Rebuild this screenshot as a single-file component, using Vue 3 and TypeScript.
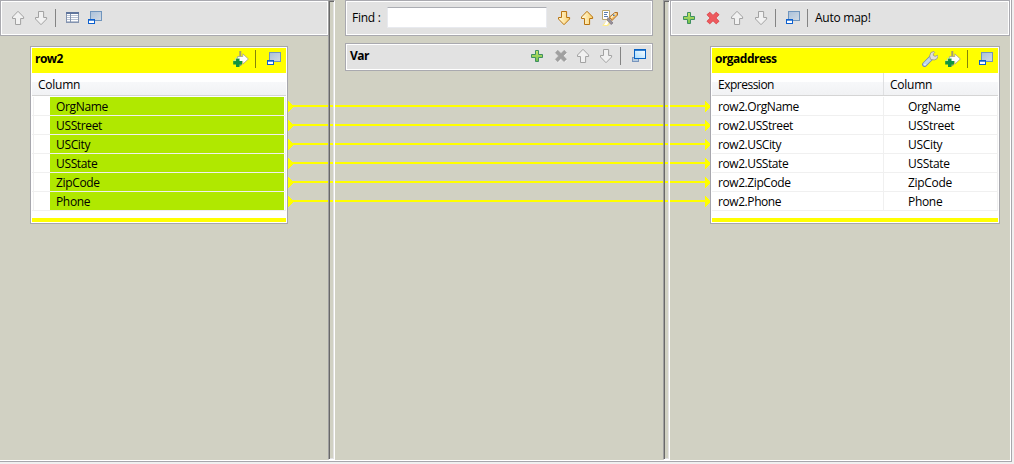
<script setup lang="ts">
interface Tool {
  icon: string
  gap?: string
}

const fields: string[] = ['OrgName', 'USStreet', 'USCity', 'USState', 'ZipCode', 'Phone']

const inputTools: Tool[] = [
  { icon: 'up' },
  { icon: 'down', gap: 'g7' },
  { icon: 'sep', gap: 'g6' },
  { icon: 'table', gap: 'g9' },
  { icon: 'restore', gap: 'g6' },
]
const findTools: Tool[] = [
  { icon: 'down-gold', gap: 'g9' },
  { icon: 'up-gold', gap: 'g7' },
  { icon: 'torch', gap: 'g7' },
]
const varTools: Tool[] = [
  { icon: 'plus' },
  { icon: 'cross-gray', gap: 'g8' },
  { icon: 'up', gap: 'g6' },
  { icon: 'down', gap: 'g7' },
  { icon: 'sep', gap: 'g6' },
  { icon: 'maximize', gap: 'g10' },
]
const outputTools: Tool[] = [
  { icon: 'plus' },
  { icon: 'cross', gap: 'g8' },
  { icon: 'up', gap: 'g8' },
  { icon: 'down', gap: 'g8' },
  { icon: 'sep', gap: 'g6' },
  { icon: 'restore', gap: 'g9' },
  { icon: 'sep', gap: 'g6' },
]
const sourceTools: Tool[] = [
  { icon: 'add' },
  { icon: 'sep', gap: 'g6' },
  { icon: 'restore', gap: 'g10' },
]
const targetTools: Tool[] = [{ icon: 'wrench' }, { icon: 'add', gap: 'g7' }, ...sourceTools.slice(1)]
</script>

<template>
  <svg class="defs" width="0" height="0" aria-hidden="true">
    <defs>
      <linearGradient id="gold" x1="0" y1="0" x2="1" y2="0">
        <stop offset="0" stop-color="#fffbe0" />
        <stop offset="1" stop-color="#fbcf6a" />
      </linearGradient>
      <linearGradient id="green" x1="0" y1="0" x2="0" y2="1">
        <stop offset="0" stop-color="#c9e66a" />
        <stop offset="1" stop-color="#6fc04a" />
      </linearGradient>
      <linearGradient id="pane" x1="0" y1="0" x2="1" y2="1">
        <stop offset="0" stop-color="#a9c0da" />
        <stop offset="1" stop-color="#d3dbe3" />
      </linearGradient>
      <linearGradient id="sky" x1="1" y1="0" x2="0" y2="1">
        <stop offset="0" stop-color="#ffffff" />
        <stop offset="1" stop-color="#a6dcff" />
      </linearGradient>
      <symbol id="up" viewBox="0 0 16 16">
        <path d="M8 1.3 13.6 7v1.5h-3v6H5.5v-6h-3V7z" fill="#f1f1f1" stroke="#a2a2a2" />
      </symbol>
      <symbol id="down" viewBox="0 0 16 16">
        <path d="M8 14.7 13.6 9V7.5h-3v-6H5.5v6h-3V9z" fill="#f1f1f1" stroke="#a2a2a2" />
      </symbol>
      <symbol id="up-gold" viewBox="0 0 16 16">
        <path d="M8 1.3 13.6 7v1.5h-3v6H5.5v-6h-3V7z" fill="url(#gold)" stroke="#b9740f" />
      </symbol>
      <symbol id="down-gold" viewBox="0 0 16 16">
        <path d="M8 14.7 13.6 9V7.5h-3v-6H5.5v6h-3V9z" fill="url(#gold)" stroke="#b9740f" />
      </symbol>
      <symbol id="plus" viewBox="0 0 16 16">
        <path d="M6.5 2.5h3v4h4v3h-4v4h-3v-4h-4v-3h4z" fill="url(#green)" stroke="#3f8f62" />
      </symbol>
      <symbol id="cross" viewBox="0 0 16 16">
        <path d="M4.8 2.3 8 5.4l3.2-3.1 2.8 2.4L10.8 8l3.2 3.3-2.8 2.5L8 10.7l-3.2 3.1L2 11.3 5.2 8 2 4.7z" fill="#ee5a5e" stroke="#dc4a4e" />
      </symbol>
      <symbol id="cross-gray" viewBox="0 0 16 16">
        <path d="M4.8 2.3 8 5.5l3.2-3.2 2.4 2.4L10.4 8l3.2 3.3-2.4 2.5L8 10.6l-3.2 3.2-2.4-2.5L5.6 8 2.4 4.7z" fill="#a0a0a0" stroke="#a0a0a0" stroke-width=".6" />
        <path d="M14 5.2 11.2 8m2.8 3.5-2.5 2.6M8 11.5l-2.7 2.7" fill="none" stroke="#fff" stroke-width=".7" />
      </symbol>
      <symbol id="table" viewBox="0 0 16 16">
        <rect x="1.5" y="2.5" width="12" height="10" fill="#fff" stroke="#8494b0" />
        <path d="M1 3h13" stroke="#60759c" stroke-width="2" />
        <path d="M2 5.5h11M2 7.5h11M2 9.5h11M2 11.5h11" stroke="#b7c1d2" />
        <path d="M5.5 4v9" stroke="#8494b0" />
      </symbol>
      <symbol id="restore" viewBox="0 0 16 16">
        <rect x="3.5" y="1.5" width="11" height="9" fill="url(#pane)" stroke="#7095bd" />
        <rect x="1.5" y="9.5" width="6" height="4" fill="#fff" stroke="#0d60cf" />
        <path d="M1 10h7" stroke="#0d60cf" stroke-width="1.4" />
      </symbol>
      <symbol id="maximize" viewBox="0 0 16 16">
        <rect x="1.5" y="9.5" width="6" height="4" fill="#b5cbe0" stroke="#7895bd" />
        <rect x="3.5" y="1.5" width="11" height="9" fill="url(#sky)" stroke="#0762c4" />
        <path d="M3 2h12" stroke="#0762c4" stroke-width="1.6" />
      </symbol>
      <symbol id="add" viewBox="0 0 16 16">
        <path d="M6.3 0h2v15h-2z" fill="#a3a070" />
        <path d="M4.5 5.5h5.3V2.8L15.4 8l-5.6 5.2v-2.7H4.5z" fill="#fff" stroke="#a5a08a" stroke-width=".8" />
        <path d="M3 7.5h3.5V10H9v3.4H6.5v2.8H3v-2.8H.2V10H3z" fill="#119440" />
        <path d="M.2 9.6h2.4V7.1h4" fill="none" stroke="#b5e4c0" stroke-width=".8" />
      </symbol>
      <symbol id="wrench" viewBox="0 0 16 16">
        <path d="m2.6 13.4 6.4-6.4" stroke="#7089b5" stroke-width="5" stroke-linecap="round" />
        <path d="m2.7 13.3 6.3-6.3" stroke="#bdd6ed" stroke-width="3.4" stroke-linecap="round" />
        <path d="M11.9.5 8.9 1.5 7.6 5l1 3.4 3.6.6 2.7-1.2L16 5.2l-.5-.9-2.4 1-1.7-.8-.1-1.6 1.5-1.4z" fill="#e1e0dc" stroke="#94938a" stroke-width=".8" />
        <path d="M2.5 13h1v1h-1z" fill="#fff" />
      </symbol>
      <symbol id="torch" viewBox="0 0 16 16">
        <path d="M.5.5h7v9h-7z" fill="#fff" stroke="#b9a66b" />
        <path d="M2 2.5h4M2 4.5h3M2 6.5h4" stroke="#587eaf" />
        <path d="m5.5 9-5 6.2V16H6l3-3z" fill="#ffec8d" />
        <path d="m5 10-3 5h3l2-3z" fill="#fff" />
        <path d="M6 7.5 11 13l-2 1.5L5 10z" fill="#99919a" stroke="#6f6876" stroke-width=".6" />
        <path d="m7.5 7 5.5-4.5h2.5V5L10 10.5z" fill="#f4bd68" stroke="#ae702c" />
        <path d="m9 7.8 4.5-4.3" stroke="#fff1c7" stroke-width="1.4" />
        <path d="M11 4.5h1.6v1.6H11z" fill="#477bb4" />
      </symbol>
    </defs>
  </svg>

  <main class="mapper">
    <section class="pane input">
      <header class="bar tools">
        <template v-for="(t, i) in inputTools" :key="i">
          <i v-if="t.icon === 'sep'" class="sep" :class="t.gap"></i>
          <svg v-else class="icon" :class="t.gap"><use :href="'#' + t.icon" /></svg>
        </template>
      </header>
      <article class="card source">
        <div class="title">
          <b>row2</b>
          <template v-for="(t, i) in sourceTools" :key="i">
            <i v-if="t.icon === 'sep'" class="sep olive" :class="t.gap"></i>
            <svg v-else class="icon" :class="t.gap"><use :href="'#' + t.icon" /></svg>
          </template>
        </div>
        <div class="head"><span>Column</span></div>
        <div v-for="f in fields" :key="f" class="row">
          <span class="mapped">{{ f }}</span>
        </div>
        <div class="foot"></div>
      </article>
    </section>

    <div class="sash"></div>

    <section class="pane middle">
      <div class="bar find">
        <label>Find :</label>
        <input type="text" />
        <svg v-for="t in findTools" :key="t.icon" class="icon" :class="t.gap"><use :href="'#' + t.icon" /></svg>
      </div>
      <div class="bar var">
        <b>Var</b>
        <template v-for="(t, i) in varTools" :key="i">
          <i v-if="t.icon === 'sep'" class="sep" :class="t.gap"></i>
          <svg v-else class="icon" :class="t.gap"><use :href="'#' + t.icon" /></svg>
        </template>
      </div>
    </section>

    <div class="sash"></div>

    <section class="pane output">
      <header class="bar tools">
        <template v-for="(t, i) in outputTools" :key="i">
          <i v-if="t.icon === 'sep'" class="sep" :class="t.gap"></i>
          <svg v-else class="icon" :class="t.gap"><use :href="'#' + t.icon" /></svg>
        </template>
        <span class="auto">Auto map!</span>
      </header>
      <article class="card target">
        <div class="title">
          <b>orgaddress</b>
          <template v-for="(t, i) in targetTools" :key="i">
            <i v-if="t.icon === 'sep'" class="sep olive" :class="t.gap"></i>
            <svg v-else class="icon" :class="t.gap"><use :href="'#' + t.icon" /></svg>
          </template>
        </div>
        <div class="head"><span class="wide">Expression</span><span>Column</span></div>
        <div v-for="f in fields" :key="f" class="row">
          <span class="expr">row2.{{ f }}</span>
          <span class="name">{{ f }}</span>
        </div>
        <div class="foot"></div>
      </article>
    </section>

    <svg class="links" width="422" height="120" shape-rendering="crispEdges">
      <g v-for="(f, i) in fields" :key="f" :transform="`translate(0 ${i * 19})`" fill="#ffff00">
        <path d="M0 0 6 5.5 0 11z" />
        <path d="M4 4h415v2H4z" />
        <path d="M417 0 422.5 5.5 417 11z" />
      </g>
    </svg>
  </main>
</template>

<style>
html,
body {
  background: #f0f0f0;
  overflow: hidden;
}
</style>

<style scoped>
.defs {
  position: absolute;
}
.mapper {
  position: relative;
  display: flex;
  box-sizing: border-box;
  width: 1012px;
  height: 462px;
  background: #d1d1c3;
  border-right: 1px solid #a7a7ad;
  border-bottom: 1px solid #a7a7ad;
  box-shadow: inset -1px -1px #fff;
  font: 12px/16px "Open Sans", "Noto Sans", sans-serif;
  letter-spacing: -0.25px;
  color: #000;
}
.input,
.middle {
  width: 328px;
}
.output {
  width: 341px;
}
.sash {
  box-sizing: border-box;
  position: relative;
  z-index: 2;
  width: 7px;
  height: 460px;
  border: 1px solid #fff;
  border-left-color: #a0a0a0;
  border-top-color: #a0a0a0;
  box-shadow: inset 1px 1px #696969, inset -1px -1px #e3e3e3;
}
.bar {
  box-sizing: border-box;
  display: flex;
  align-items: center;
  height: 36px;
  border: 1px solid #a9a9af;
  box-shadow: inset 0 0 0 1px #fff;
  background: #e2e2e2;
}
.input .tools {
  width: 329px;
  padding-left: 9px;
}
.output .tools {
  width: 340px;
  padding-left: 10px;
}
.find,
.var {
  width: 308px;
  margin-left: 10px;
  padding-left: 6px;
}
.find label {
  width: 35px;
}
.find input {
  box-sizing: border-box;
  width: 160px;
  height: 21px;
  margin: -2px 0 0;
  padding: 0;
  border: 1px solid #e8eaef;
  border-top-color: #abadb3;
  background: #fff;
}
.var {
  height: 28px;
  margin-top: 7px;
  padding: 0 5px 2px 4px;
}
.var b,
.title b {
  flex: 1;
  letter-spacing: -0.52px;
}
.icon {
  display: block;
  flex: none;
  width: 16px;
  height: 16px;
  overflow: visible;
}
.sep {
  flex: none;
  width: 1px;
  height: 18px;
  background: #848484;
}
.olive {
  background: #84840a;
}
.g6 { margin-left: 6px; }
.g7 { margin-left: 7px; }
.g8 { margin-left: 8px; }
.g9 { margin-left: 9px; }
.g10 { margin-left: 10px; }
.auto {
  margin-left: 7px;
}
.card {
  box-sizing: border-box;
  height: 178px;
  margin-top: 10px;
  padding: 1px;
  border: 1px solid #a7a7ad;
  background: #fff;
}
.source {
  width: 258px;
  margin-left: 30px;
}
.target {
  width: 290px;
  margin-left: 40px;
}
.title {
  box-sizing: border-box;
  display: flex;
  align-items: center;
  height: 25px;
  padding: 0 4px 3px 3px;
  background: #ff0;
}
.head {
  box-sizing: border-box;
  display: flex;
  height: 23px;
  margin-bottom: 1px;
  padding: 4px 0 0 6px;
  border-bottom: 1px solid #d5d5d5;
  background: linear-gradient(#fff 0 9px, #f7f8fa 9px, #f1f2f4 22px);
}
.head .wide {
  width: 165px;
  margin: -4px 6px 0 0;
  padding: 4px 0 0;
  border-right: 1px solid #dfe0e2;
  letter-spacing: -0.5px;
}
.row {
  box-sizing: border-box;
  display: flex;
  height: 19px;
  border-bottom: 1px solid #f0f0f0;
  border-right: 1px solid #f0f0f0;
  line-height: 20px;
}
.source .row {
  padding-left: 1px;
}
.source .row::before {
  content: "";
  box-sizing: border-box;
  width: 17px;
  border-left: 1px solid #f0f0f0;
}
.mapped {
  width: 228px;
  height: 18px;
  padding-left: 6px;
  background: #b0e800;
  letter-spacing: -0.35px;
}
.expr {
  box-sizing: border-box;
  width: 172px;
  height: 18px;
  padding-left: 6px;
  border-right: 1px solid #f0f0f0;
  letter-spacing: -0.42px;
}
.name {
  height: 18px;
  padding-left: 24px;
  letter-spacing: -0.32px;
}
.foot {
  height: 4px;
  margin-top: 7px;
  background: #ff0;
}
.links {
  position: absolute;
  left: 288px;
  top: 101px;
  z-index: 1;
}
</style>
